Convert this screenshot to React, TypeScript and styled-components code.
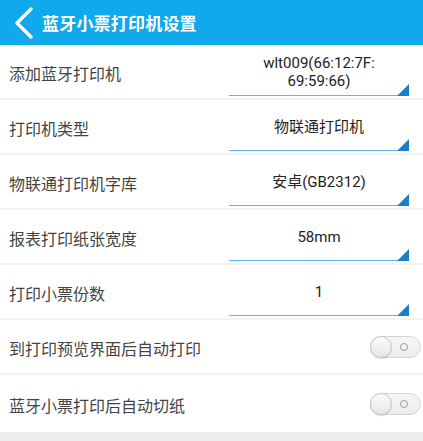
import styled, { createGlobalStyle } from 'styled-components';

const GlobalStyle = createGlobalStyle`
  html, body {
    margin: 0;
    padding: 0;
    background: #eeeeee;
    font-family: Roboto, "Noto Sans CJK SC", sans-serif;
  }
`;

type SelectRowType = {
  label: string;
  value: string;
};

const selectRows: SelectRowType[] = [
  { label: '添加蓝牙打印机', value: 'wlt009(66:12:7F:\n69:59:66)' },
  { label: '打印机类型', value: '物联通打印机' },
  { label: '物联通打印机字库', value: '安卓(GB2312)' },
  { label: '报表打印纸张宽度', value: '58mm' },
  { label: '打印小票份数', value: '1' },
];

const switchRows = ['到打印预览界面后自动打印', '蓝牙小票打印后自动切纸'];

const App = () => {
  return (
    <Page>
      <GlobalStyle />
      <Header>
        <BackIcon width="22" height="32" viewBox="0 0 22 32">
          <path d="M18 2 L4 16 L18 30" fill="none" stroke="#fff" strokeWidth="3.4" strokeLinecap="round" strokeLinejoin="round" />
        </BackIcon>
        <Title>蓝牙小票打印机设置</Title>
      </Header>

      {selectRows.map((row, i) => (
        <Row key={i}>
          <Label>{row.label}</Label>
          <Select>
            <SelectValue>{row.value}</SelectValue>
            <Corner width="12" height="12" viewBox="0 0 12 12">
              <path d="M12 0 L12 12 L0 12 Z" fill="#1a7fc8" />
            </Corner>
          </Select>
        </Row>
      ))}

      {switchRows.map((label, i) => (
        <Row key={i} $last={i === switchRows.length - 1}>
          <Label>{label}</Label>
          <Toggle>
            <Knob />
            <OffMark />
          </Toggle>
        </Row>
      ))}
    </Page>
  );
};

export default App;

const Page = styled.div`
  width: 423px;
  height: 441px;
  background: #eeeeee;
  overflow: hidden;
`;

const Header = styled.div`
  display: flex;
  align-items: center;
  height: 45px;
  padding-left: 13px;
  background-color: #0fa9ec;
`;

const BackIcon = styled.svg`
  display: block;
  margin-right: 7px;
`;

const Title = styled.div`
  color: #ffffff;
  font-size: 17px;
  font-weight: 700;
  letter-spacing: 0.2px;
`;

const Row = styled.div<{ $last?: boolean }>`
  display: flex;
  align-items: center;
  justify-content: space-between;
  box-sizing: border-box;
  height: ${(p) => (p.$last ? '57px' : '55px')};
  padding: 0 0 0 9px;
  background: #ffffff;
  border-bottom: ${(p) => (p.$last ? 'none' : '2px solid #f2f2f2')};
`;

const Label = styled.div`
  color: #444444;
  font-size: 16px;
  padding-top: 2px;
`;

const Select = styled.div`
  position: relative;
  display: flex;
  align-items: center;
  justify-content: center;
  box-sizing: border-box;
  width: 180px;
  height: 42px;
  margin-right: 14px;
  margin-top: 6px;
  padding-bottom: 4px;
  border-bottom: 1.5px solid #5cb6e6;
`;

const SelectValue = styled.div`
  color: #222222;
  font-size: 15px;
  line-height: 18px;
  text-align: center;
  white-space: pre-line;
`;

const Corner = styled.svg`
  position: absolute;
  right: 0;
  bottom: -1px;
`;

const Toggle = styled.div`
  position: relative;
  display: flex;
  align-items: center;
  box-sizing: border-box;
  width: 51px;
  height: 22px;
  margin-right: 2px;
  border: 1px solid #d4d4d4;
  border-radius: 11px;
  background: linear-gradient(#f6f6f6, #ececec);
`;

const Knob = styled.div`
  position: absolute;
  left: -1px;
  top: -1px;
  box-sizing: border-box;
  width: 22px;
  height: 22px;
  border-radius: 50%;
  border: 1px solid #c8c8c8;
  background: linear-gradient(#fdfdfd, #e6e6e6);
  box-shadow: 0 1px 1px rgba(0, 0, 0, 0.15);
`;

const OffMark = styled.div`
  position: absolute;
  right: 12px;
  top: 6px;
  box-sizing: border-box;
  width: 8px;
  height: 8px;
  border-radius: 50%;
  border: 1.5px solid #9a9a9a;
`;
